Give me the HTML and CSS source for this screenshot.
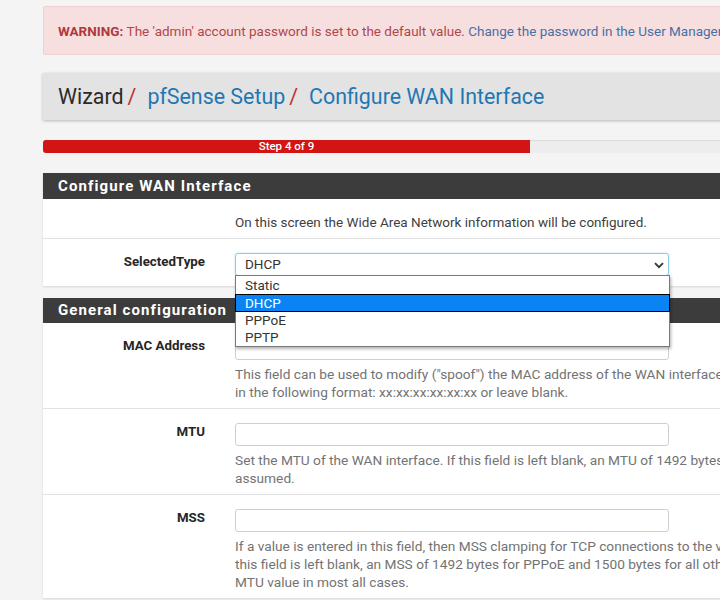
FILE: index.html
```html
<!DOCTYPE html>
<html>
<head>
<meta charset="utf-8">
<link rel="stylesheet" href="styles.css">
</head>
<body>
<div class="page">
  <div class="alert"><b>WARNING:</b>&nbsp;The 'admin' account password is set to the default value.&nbsp;<a class="alert-link">Change the password in the User Manager.</a></div>

  <div class="crumbs">
    <span class="crumb-plain">Wizard</span><span class="sep">/</span>
    <a class="crumb-link">pfSense Setup</a><span class="sep">/</span>
    <a class="crumb-link">Configure WAN Interface</a>
  </div>

  <div class="progress">
    <div class="progress-fill" style="width:487px">Step 4 of 9</div>
  </div>

  <div class="panel">
    <div class="panel-head">Configure WAN Interface</div>
    <div class="row row-intro">
      <div class="label"></div>
      <div class="field"><span class="intro">On this screen the Wide Area Network information will be configured.</span></div>
    </div>
    <div class="row row-last">
      <div class="label">SelectedType</div>
      <div class="field">
        <div class="select-wrap">
          <div class="select">DHCP
            <svg class="chev" width="10" height="7" viewBox="0 0 10 7"><path d="M1 1.2 L5 5.2 L9 1.2" fill="none" stroke="#333" stroke-width="1.8"/></svg>
          </div>
          <div class="dropdown">
            <div class="opt">Static</div>
            <div class="opt opt-sel">DHCP</div>
            <div class="opt">PPPoE</div>
            <div class="opt">PPTP</div>
          </div>
        </div>
      </div>
    </div>
  </div>

  <div class="panel panel-2">
    <div class="panel-head">General configuration</div>
    <div class="row">
      <div class="label">MAC Address</div>
      <div class="field">
        <div class="input"></div>
        <div class="help">This field can be used to modify ("spoof") the MAC address of the WAN interface (may be required with some cable connections). Enter a MAC address<br>in the following format: xx:xx:xx:xx:xx:xx or leave blank.</div>
      </div>
    </div>
    <div class="row">
      <div class="label">MTU</div>
      <div class="field">
        <div class="input"></div>
        <div class="help">Set the MTU of the WAN interface. If this field is left blank, an MTU of 1492 bytes for PPPoE and 1500 bytes for all other connection types will be<br>assumed.</div>
      </div>
    </div>
    <div class="row">
      <div class="label">MSS</div>
      <div class="field">
        <div class="input"></div>
        <div class="help">If a value is entered in this field, then MSS clamping for TCP connections to the value entered above minus 40 (TCP/IP header size) will be in effect. If<br>this field is left blank, an MSS of 1492 bytes for PPPoE and 1500 bytes for all other connection types will be assumed. This should match the above<br>MTU value in most all cases.</div>
      </div>
    </div>
  </div>
</div>
</body>
</html>
```

FILE: styles.css
```css
html, body {
  margin: 0;
  padding: 0;
  background: #f4f4f4;
  overflow: hidden;
}
body {
  font-family: Roboto, "Liberation Sans", sans-serif;
  color: #222;
  width: 720px;
  height: 600px;
}
.page {
  width: 1000px;
  padding: 6px 0 0 43px;
}
.alert {
  height: 47px;
  display: flex;
  align-items: center;
  padding-left: 14px;
  background: #f7dfdf;
  border: 1px solid #efcfd2;
  border-radius: 2px;
  color: #b0484a;
  font-size: 13.5px;
  white-space: nowrap;
}
.alert b { font-weight: 700; color: #b0393b; }
.alert-link { color: #4a6fa5; }
.crumbs {
  margin-top: 18px;
  height: 47px;
  display: flex;
  align-items: center;
  padding-left: 15px;
  background: #e3e3e3;
  box-shadow: 0 1px 3px rgba(0,0,0,0.25);
  font-size: 21.4px;
  white-space: nowrap;
}
.crumb-plain { color: #2b2b2b; }
.sep { color: #c0302a; margin: 0 11px 0 4px; }
.crumb-link { color: #1f77b4; }
.progress {
  margin-top: 20px;
  height: 13px;
  background: #ededed;
  border-radius: 3px;
  box-shadow: inset 0 1px 1px rgba(0,0,0,0.08);
}
.progress-fill {
  height: 13px;
  background: #d21414;
  border-radius: 3px 0 0 3px;
  color: #fff;
  font-size: 11.5px;
  font-weight: 500;
  line-height: 13px;
  text-align: center;
}
.panel {
  margin-top: 20px;
  background: #fff;
  box-shadow: 0 1px 2px rgba(0,0,0,0.12);
}
.panel-2 { margin-top: 12px; }
.panel-head {
  height: 26px;
  line-height: 26px;
  background: #3c3c3c;
  color: #fff;
  font-size: 15px;
  font-weight: 700;
  letter-spacing: 1.1px;
  padding-left: 15px;
}
.panel-2 .panel-head { height: 25px; line-height: 25px; }
.row {
  display: grid;
  grid-template-columns: 177px 1fr;
  border-top: 1px solid #e2e2e2;
  padding: 14px 0 7px;
}
.panel-head + .row { border-top: none; }
.row-intro { padding: 13px 0 7px; }
.row-last { padding-bottom: 10px; }
.label {
  text-align: right;
  padding-right: 15px;
  font-size: 13.3px;
  font-weight: 700;
  line-height: 18px;
  color: #262626;
}
.field {
  padding-left: 15px;
  min-width: 0;
}
.intro {
  font-size: 13.5px;
  line-height: 18px;
  color: #3f3f3f;
}
.input {
  width: 432px;
  height: 21px;
  border: 1px solid #cfcfcf;
  border-radius: 3px;
  background: #fff;
}
.help {
  margin-top: 5px;
  font-size: 13.7px;
  line-height: 18px;
  color: #737373;
  white-space: nowrap;
}
.select-wrap { position: relative; width: 434px; }
.select {
  height: 21px;
  border: 1px solid #8ccbe0;
  border-radius: 3px;
  box-shadow: 0 0 2px rgba(102,175,233,0.5);
  font-size: 13.5px;
  line-height: 21px;
  padding-left: 9px;
  color: #333;
  position: relative;
}
.chev { position: absolute; right: 4px; top: 8px; }
.dropdown {
  position: absolute;
  left: 0;
  top: 22px;
  width: 433px;
  background: #fff;
  border: 1px solid #7a7a7a;
  box-shadow: 1px 2px 3px rgba(0,0,0,0.3);
  z-index: 5;
  padding-top: 1px;
}
.opt {
  height: 17px;
  line-height: 17px;
  font-size: 13.5px;
  padding-left: 9px;
  color: #333;
}
.opt-sel {
  background: #0a84f5;
  color: #fff;
  border: 1px solid #000;
  margin: 0 -1px;
  height: 16px;
  line-height: 16px;
  padding-left: 9px;
}
```
